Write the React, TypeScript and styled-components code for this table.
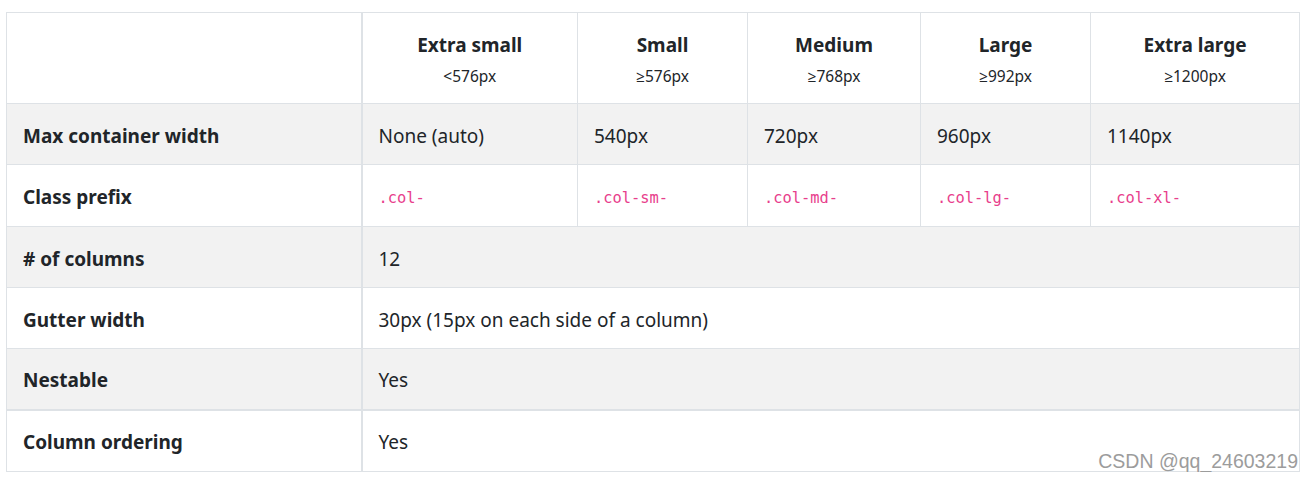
import React from "react";
import styled, { createGlobalStyle } from "styled-components";

const GlobalStyle = createGlobalStyle`
  html, body { margin: 0; padding: 0; background: #ffffff; }
  body { font-family: "Noto Sans", "Open Sans", sans-serif; color: #212529; }
`;

const Wrapper = styled.div`
  position: relative;
  width: 1293px;
  margin: 12px 0 0 6px;
`;

const Table = styled.table`
  width: 1293px;
  table-layout: fixed;
  border-collapse: collapse;
  font-size: 19px;
  line-height: 30px;
  color: #212529;
`;

const Col = styled.col<{ $w: number }>`
  width: ${(p) => p.$w}px;
`;

const Row = styled.tr<{ $striped?: boolean; $thickTop?: boolean; $h: number }>`
  height: ${(p) => p.$h}px;
  background: ${(p) => (p.$striped ? "#f2f2f2" : "#ffffff")};
  ${(p) => (p.$thickTop ? "border-top: 2px solid #dee2e6;" : "")}
`;

const HeadCell = styled.th`
  border: 1px solid #dee2e6;
  padding: 5px 16px 0;
  text-align: center;
  font-weight: 700;
  vertical-align: middle;
  &:first-child { border-right: 2px solid #dee2e6; }
`;

const Small = styled.small`
  display: block;
  font-size: 15.5px;
  font-weight: 400;
  line-height: 32px;
`;

const RowHead = styled.th`
  border: 1px solid #dee2e6;
  border-right: 2px solid #dee2e6;
  padding: 3px 16px 0;
  text-align: left;
  font-weight: 700;
  white-space: nowrap;
  vertical-align: middle;
`;

const Cell = styled.td`
  border: 1px solid #dee2e6;
  padding: 3px 16px 0;
  text-align: left;
  white-space: nowrap;
  vertical-align: middle;
`;

const Code = styled.code`
  font-family: "DejaVu Sans Mono", "Liberation Mono", monospace;
  font-size: 15.4px;
  color: #e83e8c;
`;

const Watermark = styled.div`
  position: absolute;
  right: 1px;
  bottom: -1px;
  font-family: "Liberation Sans", Arial, sans-serif;
  font-size: 19.5px;
  line-height: 24px;
  color: #9c9c9c;
  text-shadow: 0 0 1px rgba(255, 255, 255, 0.9);
  pointer-events: none;
`;

const breakpoints = [
  { name: "Extra small", size: "<576px", width: "None (auto)", prefix: ".col-" },
  { name: "Small", size: "≥576px", width: "540px", prefix: ".col-sm-" },
  { name: "Medium", size: "≥768px", width: "720px", prefix: ".col-md-" },
  { name: "Large", size: "≥992px", width: "960px", prefix: ".col-lg-" },
  { name: "Extra large", size: "≥1200px", width: "1140px", prefix: ".col-xl-" },
];

const colWidths = [355, 216, 170, 173, 170, 209];

export default function App() {
  return (
    <>
      <GlobalStyle />
      <Wrapper>
        <Table>
          <colgroup>
            {colWidths.map((w, i) => (
              <Col key={i} $w={w} />
            ))}
          </colgroup>
          <thead>
            <Row $h={91}>
              <HeadCell />
              {breakpoints.map((b) => (
                <HeadCell key={b.name}>
                  {b.name}
                  <Small>{b.size}</Small>
                </HeadCell>
              ))}
            </Row>
          </thead>
          <tbody>
            <Row $striped $h={61}>
              <RowHead>Max container width</RowHead>
              {breakpoints.map((b) => (
                <Cell key={b.name}>{b.width}</Cell>
              ))}
            </Row>
            <Row $h={62}>
              <RowHead>Class prefix</RowHead>
              {breakpoints.map((b) => (
                <Cell key={b.name}>
                  <Code>{b.prefix}</Code>
                </Cell>
              ))}
            </Row>
            <Row $striped $h={61}>
              <RowHead># of columns</RowHead>
              <Cell colSpan={5}>12</Cell>
            </Row>
            <Row $h={61}>
              <RowHead>Gutter width</RowHead>
              <Cell colSpan={5}>30px (15px on each side of a column)</Cell>
            </Row>
            <Row $striped $h={61}>
              <RowHead>Nestable</RowHead>
              <Cell colSpan={5}>Yes</Cell>
            </Row>
            <Row $thickTop $h={62}>
              <RowHead>Column ordering</RowHead>
              <Cell colSpan={5}>Yes</Cell>
            </Row>
          </tbody>
        </Table>
        <Watermark>CSDN @qq_24603219</Watermark>
      </Wrapper>
    </>
  );
}
